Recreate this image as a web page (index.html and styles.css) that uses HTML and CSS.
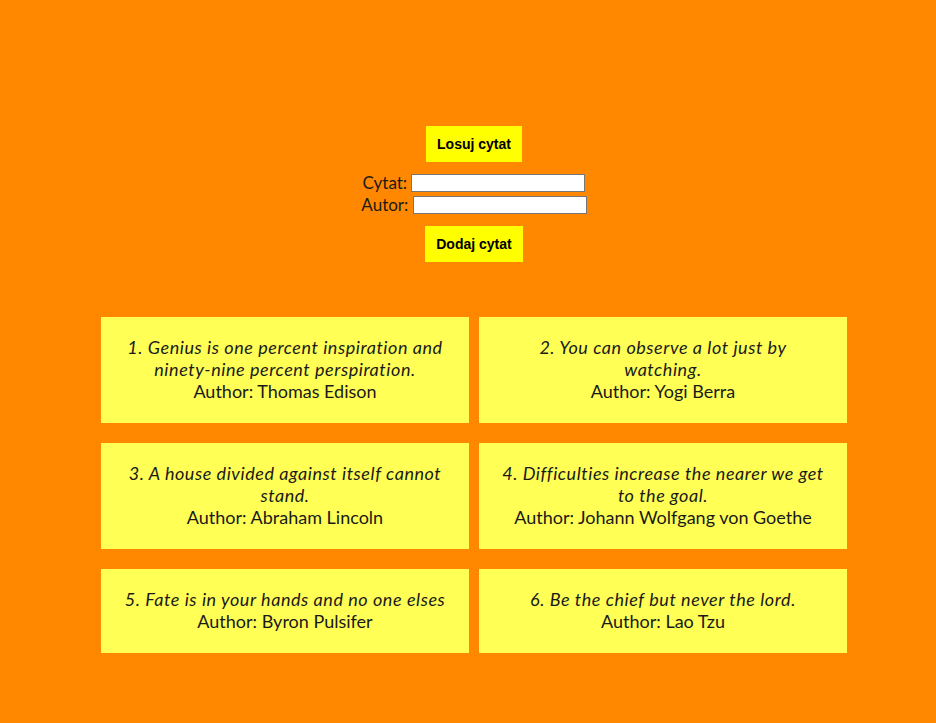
FILE: index.html
```html
<!DOCTYPE html>
<html lang="pl">
<head>
<meta charset="UTF-8" />
<meta name="viewport" content="width=device-width, initial-scale=1.0" />
<title>Cytaty</title>
<link rel="stylesheet" href="styles.css">
</head>
<body>
<div class="page">
  <div class="controls">
    <button class="btn" type="button">Losuj cytat</button>
    <form class="add-form" onsubmit="return false;">
      <div class="field"><label for="quote">Cytat:</label> <input type="text" id="quote" /></div>
      <div class="field"><label for="author">Autor:</label> <input type="text" id="author" /></div>
      <button class="btn" type="button">Dodaj cytat</button>
    </form>
  </div>

  <div class="quotes">
    <div class="quote-card">
      <em>1. Genius is one percent inspiration and ninety-nine percent perspiration.</em>
      <div>Author: Thomas Edison</div>
    </div>
    <div class="quote-card">
      <em>2. You can observe a lot just by watching.</em>
      <div>Author: Yogi Berra</div>
    </div>
    <div class="quote-card">
      <em>3. A house divided against itself cannot stand.</em>
      <div>Author: Abraham Lincoln</div>
    </div>
    <div class="quote-card">
      <em>4. Difficulties increase the nearer we get to the goal.</em>
      <div>Author: Johann Wolfgang von Goethe</div>
    </div>
    <div class="quote-card">
      <em>5. Fate is in your hands and no one elses</em>
      <div>Author: Byron Pulsifer</div>
    </div>
    <div class="quote-card">
      <em>6. Be the chief but never the lord.</em>
      <div>Author: Lao Tzu</div>
    </div>
  </div>
</div>
</body>
</html>
```

FILE: styles.css
```css
body {
  margin: 0;
  background: #ff8800;
  color: #1a1a1a;
  font-family: Lato, "Open Sans", sans-serif;
}
.page {
  padding: 126px 0 40px 12px;
}
.controls {
  display: flex;
  flex-direction: column;
  align-items: center;
}
.btn {
  height: 36px;
  padding: 0 11px;
  background: #ffff00;
  color: #000;
  border: none;
  font-family: "Liberation Sans", Arial, sans-serif;
  font-weight: bold;
  font-size: 14px;
  cursor: pointer;
}
.add-form {
  display: flex;
  flex-direction: column;
  align-items: center;
  margin-top: 10px;
}
.field {
  font-size: 17px;
  line-height: 22px;
  text-align: center;
}
.field input {
  width: 170px;
  height: 14px;
  padding: 1px;
  margin: 2px 0 0;
  border: 1px solid #767676;
  vertical-align: top;
  font-size: 13px;
}
.add-form .btn {
  margin-top: 10px;
}
.quotes {
  display: grid;
  grid-template-columns: 368px 368px;
  column-gap: 10px;
  row-gap: 20px;
  justify-content: center;
  margin-top: 55px;
}
.quote-card {
  background: #ffff55;
  padding: 19px 20px 21px;
  text-align: center;
  font-size: 18px;
  line-height: 22px;
}
.quote-card em {
  letter-spacing: 0.55px;
}
```
